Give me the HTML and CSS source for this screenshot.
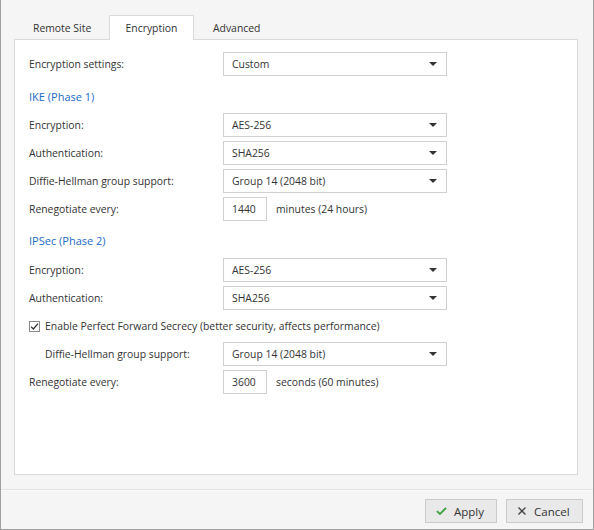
FILE: index.html
```html
<!DOCTYPE html>
<html>
<head>
<meta charset="utf-8">
<link rel="stylesheet" href="styles.css">
</head>
<body>
<div class="window">
  <div class="top">
    <div class="tabs">
      <div class="tab">Remote Site</div>
      <div class="tab active">Encryption</div>
      <div class="tab">Advanced</div>
    </div>
    <div class="panel">
      <div class="row">
        <div class="label">Encryption settings:</div>
        <div class="select"><span>Custom</span><span class="caret"></span></div>
      </div>
      <div class="heading">IKE (Phase 1)</div>
      <div class="group">
        <div class="row">
          <div class="label">Encryption:</div>
          <div class="select"><span>AES-256</span><span class="caret"></span></div>
        </div>
        <div class="row">
          <div class="label">Authentication:</div>
          <div class="select"><span>SHA256</span><span class="caret"></span></div>
        </div>
        <div class="row">
          <div class="label">Diffie-Hellman group support:</div>
          <div class="select"><span>Group 14 (2048 bit)</span><span class="caret"></span></div>
        </div>
        <div class="row">
          <div class="label">Renegotiate every:</div>
          <div class="input">1440</div>
          <div class="unit">minutes (24 hours)</div>
        </div>
      </div>
      <div class="heading">IPSec (Phase 2)</div>
      <div class="group">
        <div class="row">
          <div class="label">Encryption:</div>
          <div class="select"><span>AES-256</span><span class="caret"></span></div>
        </div>
        <div class="row">
          <div class="label">Authentication:</div>
          <div class="select"><span>SHA256</span><span class="caret"></span></div>
        </div>
        <div class="row">
          <label class="check"><span class="box"><svg width="9" height="9" viewBox="0 0 9 9"><path d="M1 4.6 L3.4 7 L8 1.6" fill="none" stroke="#333" stroke-width="1.3"/></svg></span>Enable Perfect Forward Secrecy (better security, affects performance)</label>
        </div>
        <div class="row">
          <div class="label indent">Diffie-Hellman group support:</div>
          <div class="select"><span>Group 14 (2048 bit)</span><span class="caret"></span></div>
        </div>
        <div class="row">
          <div class="label">Renegotiate every:</div>
          <div class="input">3600</div>
          <div class="unit">seconds (60 minutes)</div>
        </div>
      </div>
    </div>
  </div>
  <div class="footer">
    <button class="btn"><svg width="12" height="10" viewBox="0 0 12 10"><path d="M1 5.2 L4.3 8.3 L11 1.5" fill="none" stroke="#3aa13a" stroke-width="2"/></svg>Apply</button>
    <button class="btn"><svg width="10" height="10" viewBox="0 0 10 10"><path d="M1.5 1.5 L8.5 8.5 M8.5 1.5 L1.5 8.5" fill="none" stroke="#444" stroke-width="1.4"/></svg>Cancel</button>
  </div>
</div>
</body>
</html>
```
FILE: styles.css
```css
* { box-sizing: border-box; }
html, body { margin: 0; padding: 0; }
body {
  font-family: "Open Sans", "Noto Sans", sans-serif;
  font-size: 10.4px;
  color: #333;
  background: #fff;
}
.window {
  width: 594px;
  height: 530px;
  background: #f5f5f5;
  border: 1px solid #a0a0a0;
  border-top: none;
  display: flex;
  flex-direction: column;
}
.top {
  height: 490px;
  padding: 15px 15px 14px 13px;
  display: flex;
  flex-direction: column;
  border-bottom: 1px solid #e2e2e2;
}
.tabs {
  display: flex;
  height: 24px;
  position: relative;
  z-index: 1;
}
.tab {
  height: 24px;
  line-height: 24px;
  padding: 0 18px;
  color: #333;
  white-space: nowrap;
  border: 1px solid transparent;
  border-bottom: none;
}
.tab:first-child { width: 95px; }
.tab.active {
  width: 85px;
  text-align: center;
  padding: 0;
  background: #fff;
  border-color: #dadada;
  height: 25px;
}
.panel {
  flex: 1;
  background: #fff;
  border: 1px solid #dadada;
  padding: 12px 14px;
}
.row {
  display: flex;
  align-items: center;
  height: 24px;
  white-space: nowrap;
}
.group {
  display: flex;
  flex-direction: column;
  gap: 4px;
}
.label {
  width: 194px;
  flex: none;
}
.label.indent { padding-left: 16px; }
.heading {
  color: #1a6cc4;
  font-size: 11px;
  height: 20px;
  line-height: 20px;
  margin: 11px 0 6px;
}
.group + .heading { margin: 10px 0 7px; }
.select {
  width: 224px;
  height: 24px;
  border: 1px solid #d0d0d0;
  display: flex;
  align-items: center;
  justify-content: space-between;
  padding: 0 8px 0 8px;
}
.caret {
  width: 0;
  height: 0;
  border-left: 4px solid transparent;
  border-right: 4px solid transparent;
  border-top: 4px solid #333;
  margin-right: 1px;
}
.input {
  width: 44px;
  height: 24px;
  border: 1px solid #d0d0d0;
  line-height: 22px;
  padding-left: 8px;
}
.unit { margin-left: 9px; }
.check {
  display: flex;
  align-items: center;
}
.box {
  width: 11px;
  height: 11px;
  border: 1px solid #8a8a8a;
  background: #fff;
  display: flex;
  align-items: center;
  justify-content: center;
  margin-right: 5px;
}
.footer {
  flex: 1;
  display: flex;
  justify-content: flex-end;
  align-items: flex-start;
  gap: 9px;
  padding: 8px 10px 0 0;
  border-top: 1px solid #fbfbfb;
}
.btn {
  height: 24px;
  display: flex;
  align-items: center;
  gap: 7px;
  font-family: inherit;
  font-size: 11.5px;
  color: #333;
  background: #e9e9e9;
  border: 1px solid #cbcbcb;
  padding: 0 12px 0 10px;
  margin: 0;
}
.btn:first-child { width: 72px; }
.btn:last-child { width: 77px; }
```
